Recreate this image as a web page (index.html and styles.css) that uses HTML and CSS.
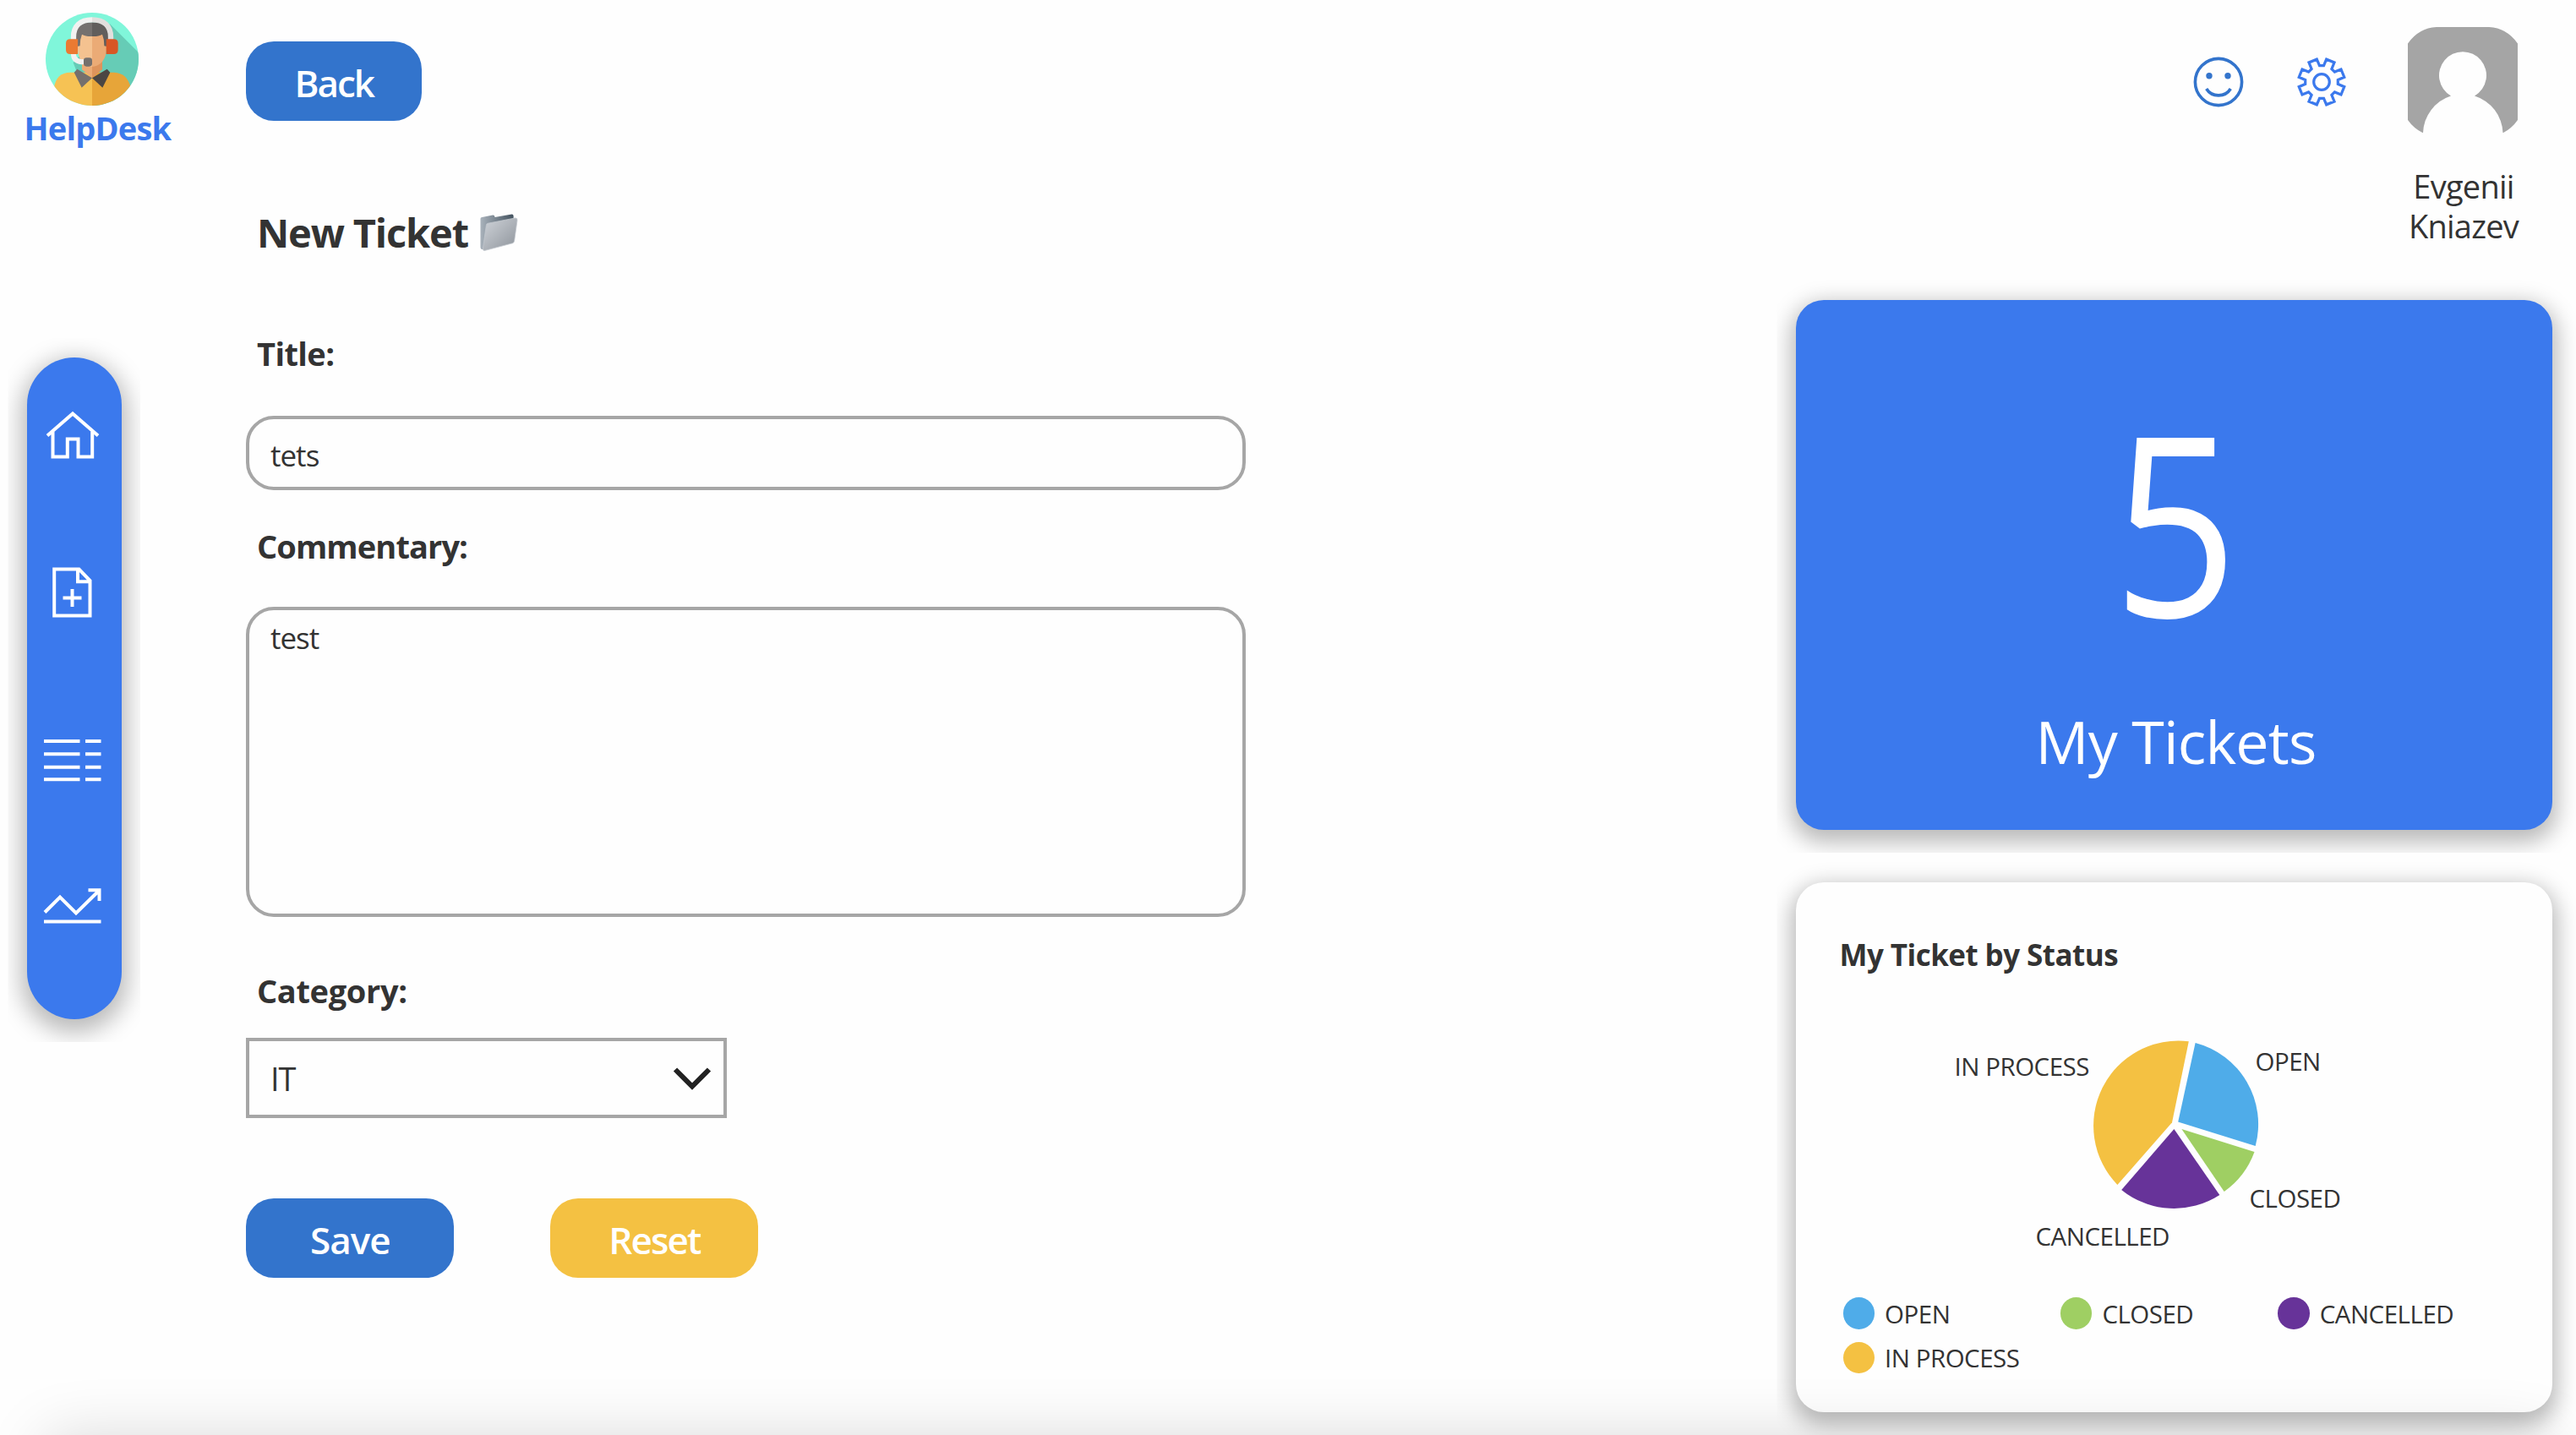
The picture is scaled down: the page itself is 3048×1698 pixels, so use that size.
FILE: index.html
```
<!DOCTYPE html>
<html lang="en">
<head>
<meta charset="utf-8">
<title>HelpDesk</title>
<link rel="stylesheet" href="styles.css">
</head>
<body>
<div class="app">
  <aside class="rail">
    <svg class="logo" viewBox="42 44 330 330">
      <defs><clipPath id="disc"><circle cx="207" cy="209" r="165"/></clipPath></defs>
      <g clip-path="url(#disc)">
        <rect x="42" y="44" width="330" height="330" fill="#80f6da"/>
        <path d="M270 84L380 194V374H200L140 222Z" fill="#66ccb6"/>
        <path d="M72 374V310Q80 256 130 256H207V374Z" fill="#f6c254"/>
        <path d="M207 256H285Q332 258 344 310V374H207Z" fill="#e7a539"/>
        <path d="M171 215H207V276L171 246Z" fill="#ebab76"/>
        <path d="M207 215H243V246L207 276Z" fill="#de945c"/>
        <path d="M154 244L207 276L170 310L143 256Z" fill="#75706d"/>
        <path d="M260 244L207 276L244 310L271 256Z" fill="#4b4643"/>
        <path d="M156 120H207V235C176 235 156 205 156 172Z" fill="#f4c290"/>
        <path d="M207 120H258V172C258 205 238 235 207 235Z" fill="#ebab76"/>
        <path d="M207 78V128Q184 129 171 121Q163 140 164 162L154 164L149 130C146 96 168 78 207 78Z" fill="#75716f"/>
        <path d="M207 78V128Q230 129 243 121Q251 140 250 162L260 164L265 130C268 96 246 78 207 78Z" fill="#615e5c"/>
        <path d="M141 145V130C141 92 164 69 207 69" fill="none" stroke="#f2f1f0" stroke-width="19"/>
        <path d="M273 145V130C273 92 250 69 207 69" fill="none" stroke="#e2dfdd" stroke-width="19"/>
        <path d="M141 188V194Q143 220 182 219" fill="none" stroke="#f2f1f0" stroke-width="18"/>
        <rect x="177" y="204" width="30" height="31" rx="10" fill="#75706d"/>
        <path d="M156 138V191H129Q114 191 114 176V153Q114 138 129 138Z" fill="#ea7a32"/>
        <path d="M257 138V191H284Q299 191 299 176V153Q299 138 284 138Z" fill="#d85624"/>
      </g>
    </svg>
    <div class="brand">HelpDesk</div>
    <nav class="nav">
      <svg class="nav-icon nav-home" viewBox="0 0 72 72"><path d="M6 37.5L36 11.5L66 37.5M12.5 33V62.5H29.8V41.5H42.5V62.5H59.2V33"/></svg>
      <svg class="nav-icon nav-add" viewBox="0 0 72 72"><path d="M14.2 8.5H43.5L56.5 22V63.6H14.2ZM42 8.5V23.2H56.5M24.5 42.5H46.5M35.5 32V53"/></svg>
      <svg class="nav-icon nav-list" viewBox="0 0 72 72"><path d="M2 13H44.5M2 28.2H44.5M2 43.7H44.5M2 58.2H44.5M51 13H69.5M51 28.2H69.5M51 43.7H69.5M51 58.2H69.5"/></svg>
      <svg class="nav-icon nav-trend" viewBox="0 0 72 72"><path d="M3 43.5L21 25.5L40 44.5L67 18M54.5 17.3H67.5V30M2 54.5H69.5"/></svg>
    </nav>
  </aside>

  <main class="main">
    <button class="btn btn-back">Back</button>
    <h1 class="heading">New Ticket
      <svg class="folder" viewBox="0 0 46 46">
        <defs>
          <linearGradient id="front" x1="0" y1="0" x2="1" y2="1"><stop offset="0" stop-color="#d0d4da"/><stop offset="1" stop-color="#8d939a"/></linearGradient>
          <linearGradient id="back" x1="0" y1="0" x2="1" y2="0"><stop offset="0" stop-color="#a9b2bb"/><stop offset="1" stop-color="#43525f"/></linearGradient>
        </defs>
        <path d="M1 6Q1 4 3 4L16 1.500Q18 1.300 18.500 4L39 0.500Q41 0.500 41 3V30L4 43Q1 43 1 40Z" fill="url(#back)"/>
        <path d="M8 14Q8 12 10 11.500L43 5Q46 5 45.500 8L42 33Q41.500 35 40 35.500L6 44.500Q4 45 4 42Z" fill="url(#front)" stroke="#c3c8ce" stroke-width=".8"/>
      </svg>
    </h1>
    <label class="label label-title" for="title">Title:</label>
    <input class="field field-title" id="title" type="text" value="tets">
    <label class="label label-comment" for="comment">Commentary:</label>
    <textarea class="field field-comment" id="comment">test</textarea>
    <div class="label label-category">Category:</div>
    <div class="select">IT
      <svg class="chevron" viewBox="0 0 48 32"><path d="M4 5.500L24 25.500L44 5.500"/></svg>
    </div>
    <div class="actions">
      <button class="btn btn-save">Save</button>
      <button class="btn btn-reset">Reset</button>
    </div>
  </main>

  <section class="side">
    <header class="tools">
      <svg class="tool smile" viewBox="-30 -30 60 60">
        <circle r="27.600" class="line"/>
        <path d="M-14.300 8C-8 18.500 8 18.500 14.300 8" class="line"/>
        <circle cx="-11" cy="-7.300" r="3.700"/><circle cx="11" cy="-7.300" r="3.700"/>
      </svg>
      <svg class="tool gear" viewBox="-30 -30 60 60">
        <circle r="9.300"/>
        <path d="M-5.700 -26.800L-2.500 -19.300H2.500L5.700 -26.800L15 -23L11.900 -15.400L15.400 -11.900L23 -15L26.800 -5.700L19.300 -2.500V2.500L26.800 5.700L23 15L15.400 11.900L11.900 15.400L15 23L5.700 26.800L2.500 19.300H-2.500L-5.700 26.800L-15 23L-11.900 15.400L-15.400 11.900L-23 15L-26.800 5.700L-19.300 2.500V-2.500L-26.800 -5.700L-23 -15L-15.400 -11.900L-11.900 -15.400L-15 -23Z"/>
      </svg>
      <div class="user">
        <svg class="avatar" viewBox="0 0 130 125.300">
          <path d="M34 0H96Q117 1 130 19.500V110Q123 120 112.500 125.300A47.500 47.500 0 0 0 79 81.500A28 28 0 1 0 51 81.500A47.500 47.500 0 0 0 18 125.300Q7 120 0 110V19.500Q13 1 34 0Z" fill="#a5a5a5"/>
        </svg>
        <div class="user-name">Evgenii<br>Kniazev</div>
      </div>
    </header>
    <div class="card card-count">
      <div class="count">5</div>
      <div class="count-label">My Tickets</div>
    </div>
    <div class="card card-status">
      <h2 class="card-title">My Ticket by Status</h2>
      <svg class="pie" viewBox="0 0 795 380.500">
        <path d="M397 175.300L416.800 79.200A100.500 100.500 0 0 0 332.400 248.900Z" fill="#f4c142"/>
        <path d="M404.200 174.400L424.600 81A99.500 99.500 0 0 1 495.700 203Z" fill="#4face9"/>
        <path d="M408.400 183L494.500 210A99 99 0 0 1 458.700 257Z" fill="#9fcf63"/>
        <path d="M399.400 183L453.300 261A99 99 0 0 1 337.200 254.900Z" fill="#673399"/>
        <text x="139.600" y="119.500">IN PROCESS</text>
        <text x="495.500" y="113.500">OPEN</text>
        <text x="488.500" y="276">CLOSED</text>
        <text x="235.500" y="320.500">CANCELLED</text>
      </svg>
      <ul class="legend">
        <li class="legend-item"><span class="dot dot-open"></span>OPEN</li>
        <li class="legend-item"><span class="dot dot-closed"></span>CLOSED</li>
        <li class="legend-item"><span class="dot dot-cancelled"></span>CANCELLED</li>
        <li class="legend-item"><span class="dot dot-process"></span>IN PROCESS</li>
      </ul>
    </div>
  </section>
</div>
<div class="bottom-shade"></div>
</body>
</html>
```
FILE: styles.css
```
* { box-sizing: border-box; }

body {
  margin: 0;
  height: 1698px;
  overflow: hidden;
  background: #fefefe;
  color: #333;
  font-family: "Open Sans", "Noto Sans", sans-serif;
}

svg { display: block; }

.app { display: flex; width: 3048px; height: 1698px; }

/* Left rail */
.rail { width: 291.4px; padding-top: 14.5px; }
.logo { width: 110px; height: 110px; margin-left: 54px; }
.brand {
  margin-left: 28.5px;
  font-size: 38px;
  font-weight: 700;
  line-height: 52px;
  letter-spacing: -0.8px;
  color: #3b79ed;
}
.nav {
  display: flex;
  flex-direction: column;
  width: 112.5px;
  height: 783px;
  margin: 246.5px 0 0 31.5px;
  padding: 54.5px 0 0 18px;
  border-radius: 56px;
  background: #3b79ed;
  box-shadow: 0 9px 28px 7px rgba(0, 0, 0, 0.27);
  clip-path: inset(-23px -22px -27px -22px);
}
.nav-icon {
  width: 72px;
  height: 72px;
  fill: none;
  stroke: #fff;
  stroke-width: 4;
}
.nav-add { margin-top: 115.5px; }
.nav-list { margin-top: 127px; }
.nav-trend { margin-top: 100px; }

/* Ticket form */
.main { display: flex; flex-direction: column; width: 1834.1px; padding-top: 49.3px; }
.btn {
  height: 94.2px;
  padding: 3px 0 0;
  border: 0;
  border-radius: 33px;
  background: #3374cc;
  color: #fff;
  font: 650 44px/60px "Open Sans", "Noto Sans", sans-serif;
}
.btn-back { width: 207.6px; letter-spacing: -2px; }
.heading {
  display: flex;
  align-items: center;
  gap: 13px;
  margin: 99.3px 0 0 12.6px;
  font-size: 47px;
  font-weight: 700;
  line-height: 64px;
  letter-spacing: -1.15px;
}
.folder { width: 46px; height: 45px; margin-top: 2px; }
.label {
  margin-left: 12.6px;
  font-size: 38px;
  font-weight: 700;
  line-height: 52px;
  letter-spacing: -0.9px;
}
.label-title { margin-top: 85.2px; letter-spacing: -0.6px; }
.label-comment { margin-top: 40.6px; }
.label-category { margin-top: 61px; letter-spacing: -0.35px; }
.field {
  width: 1182.6px;
  border: 4.4px solid #a6a6a6;
  border-radius: 33px;
  background: transparent;
  color: #333;
  font: 400 35px/48px "Open Sans", "Noto Sans", sans-serif;
  letter-spacing: -0.95px;
  outline: 0;
}
.field-title { height: 87.4px; margin-top: 48.3px; padding: 5px 24.5px 0; }
.field-comment {
  height: 367px;
  margin-top: 45.7px;
  padding: 8.7px 24.5px;
  overflow: hidden;
  resize: none;
}
.select {
  display: flex;
  align-items: center;
  justify-content: space-between;
  width: 568.3px;
  height: 94.7px;
  margin-top: 30px;
  padding: 1px 13px 0 24.5px;
  border: 4.4px solid #a6a6a6;
  font-size: 38px;
  letter-spacing: -1px;
}
.chevron { width: 48px; height: 32px; fill: none; stroke: #222; stroke-width: 6; }
.actions { display: flex; gap: 114px; margin-top: 95.6px; }
.btn-save, .btn-reset { width: 246px; }
.btn-save { letter-spacing: -1px; }
.btn-reset { background: #f4c142; letter-spacing: -1.9px; }

/* Right column */
.side { width: 895px; }
.tools {
  display: flex;
  justify-content: flex-end;
  height: 355.4px;
  padding-right: 35.5px;
}
.tool { width: 60px; height: 60px; margin-top: 66.5px; }
.smile { margin-right: 62.8px; fill: #3374cc; }
.smile .line { fill: none; stroke: #3374cc; stroke-width: 3.6; }
.gear { margin-right: 67.7px; fill: none; stroke: #3b79ed; stroke-width: 3.2; }
.user { width: 140px; padding-top: 31.7px; }
.avatar { width: 130px; height: 125.3px; margin-left: 4px; }
.user-name {
  margin-top: 39.8px;
  text-align: center;
  font-size: 38px;
  line-height: 47px;
  letter-spacing: -0.75px;
}
.card {
  height: 626.5px;
  border-radius: 33px;
  background: #fefefe;
  box-shadow: 0 9px 26px 6px rgba(0, 0, 0, 0.27);
  clip-path: inset(-30px -28px -27px -23px);
}
.card-count {
  padding: 109.6px 0 0 3px;
  background: #3b79ed;
  color: #fff;
  text-align: center;
}
.count { font-size: 297px; line-height: 300px; transform: scaleX(0.87); }
.count-label {
  margin-top: 64.5px;
  font-size: 70px;
  line-height: 96px;
  letter-spacing: -0.85px;
}
.card-status { margin-top: 62.6px; padding: 60.6px 0 0 47.5px; }
.card-title {
  margin: 0 0 0 3.5px;
  font-size: 35px;
  font-weight: 700;
  line-height: 49px;
  letter-spacing: -0.55px;
}
.pie { width: 795px; height: 380.5px; margin-top: -1px; }
.pie text, .legend { font-size: 29.5px; letter-spacing: -0.5px; }
.pie text { fill: #333; }
.legend {
  display: grid;
  grid-template-columns: repeat(3, 257.3px);
  row-gap: 11.5px;
  margin: 0;
  padding: 0 0 0 7.6px;
  list-style: none;
  line-height: 41px;
}
.legend-item { display: flex; align-items: center; gap: 12px; }
.dot { width: 37.5px; height: 37.5px; border-radius: 50%; }
.dot-open { background: #4face9; }
.dot-closed { background: #9fcf63; }
.dot-cancelled { background: #673399; }
.dot-process { background: #f4c142; }

/* Soft shade rising from the bottom edge, over everything */
.bottom-shade {
  position: fixed;
  top: 100%;
  left: 55px;
  right: 30px;
  height: 200px;
  box-shadow: 0 2px 72px rgba(0, 0, 0, 0.15);
  pointer-events: none;
}
```
